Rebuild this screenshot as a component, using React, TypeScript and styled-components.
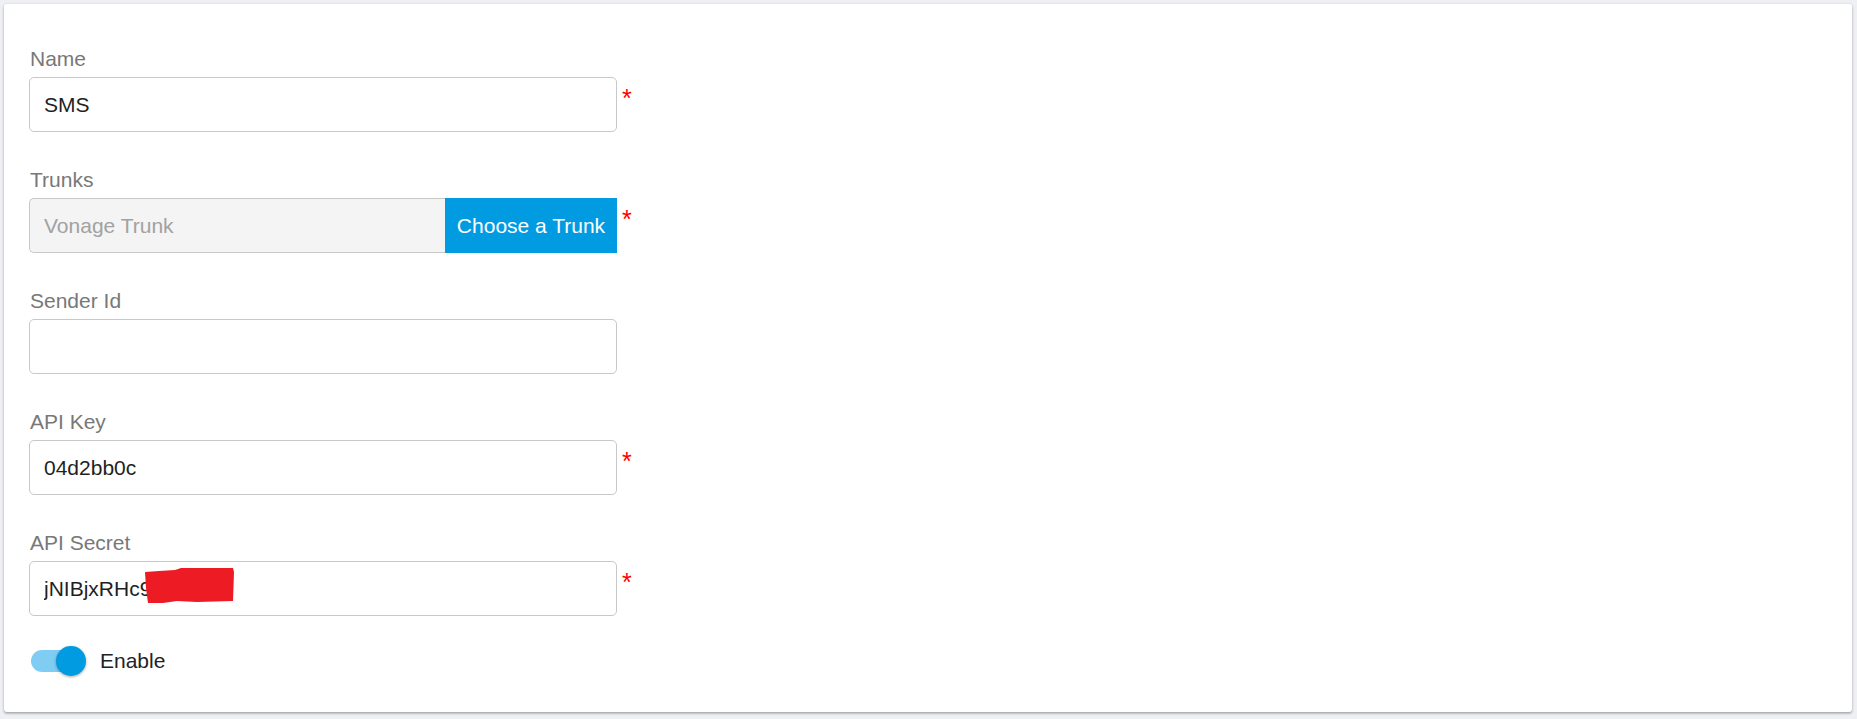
import React from 'react';
import styled, { createGlobalStyle } from 'styled-components';

const GlobalStyle = createGlobalStyle`
  html, body {
    margin: 0;
    padding: 0;
    background: #eef0f3;
  }
  body {
    font-family: "Liberation Sans", Arial, sans-serif;
  }
`;

const Page = styled.div`
  padding: 4px 5px 8px 4px;
`;

const Card = styled.div`
  background: #ffffff;
  border-radius: 3px;
  box-shadow: 0 1px 3px rgba(0, 0, 0, 0.28), 0 2px 2px rgba(0, 0, 0, 0.1);
  padding: 43px 25px 36px;
`;

const Form = styled.form`
  display: flex;
  flex-direction: column;
  gap: 36px;
  margin: 0;
`;

const Field = styled.div`
  display: flex;
  flex-direction: column;
`;

const Label = styled.label`
  font-size: 21px;
  line-height: 24px;
  color: #787878;
  margin-bottom: 6px;
  padding-left: 1px;
`;

const Row = styled.div`
  display: flex;
  align-items: flex-start;
`;

const InputWrap = styled.div`
  position: relative;
  width: 588px;
  height: 55px;
`;

const TextInput = styled.input`
  box-sizing: border-box;
  width: 100%;
  height: 100%;
  border: 1px solid #c8c8c8;
  border-radius: 5px;
  padding: 0 14px;
  font-family: inherit;
  font-size: 21px;
  color: #1f1f24;
  background: #ffffff;
  outline: none;
`;

const InputGroup = styled.div`
  display: flex;
  width: 588px;
  height: 55px;
`;

const GroupInput = styled.input`
  box-sizing: border-box;
  flex: 1;
  min-width: 0;
  height: 100%;
  border: 1px solid #c8c8c8;
  border-right: none;
  border-radius: 5px 0 0 5px;
  padding: 0 14px;
  font-family: inherit;
  font-size: 21px;
  background: #f4f4f4;
  outline: none;

  &::placeholder {
    color: #a2a2a2;
  }
`;

const GroupButton = styled.button`
  width: 172px;
  height: 100%;
  border: none;
  padding: 0 10px;
  background: #009be1;
  color: #ffffff;
  font-family: inherit;
  font-size: 21px;
  white-space: nowrap;
  cursor: pointer;
`;

const Required = styled.span`
  color: #ff0000;
  font-size: 25px;
  line-height: 25px;
  margin-left: 5px;
  margin-top: 9px;
`;

const Redaction = styled.svg`
  position: absolute;
  left: 116px;
  top: 7px;
`;

const ToggleRow = styled.div`
  display: flex;
  align-items: center;
  gap: 14px;
  margin-top: 30px;
  padding-left: 2px;
`;

const Switch = styled.div`
  position: relative;
  width: 55px;
  height: 30px;
  flex-shrink: 0;
`;

const Track = styled.div`
  position: absolute;
  left: 0;
  top: 4px;
  width: 50px;
  height: 22px;
  border-radius: 11px;
  background: #80cdf4;
`;

const Thumb = styled.div`
  position: absolute;
  right: 0;
  top: 0;
  width: 30px;
  height: 30px;
  border-radius: 50%;
  background: #009be1;
  box-shadow: 0 1px 3px rgba(0, 0, 0, 0.35);
`;

const ToggleLabel = styled.span`
  font-size: 21px;
  color: #222226;
`;

export default function App() {
  return (
    <>
      <GlobalStyle />
      <Page>
        <Card>
          <Form>
            <Field>
              <Label>Name</Label>
              <Row>
                <InputWrap>
                  <TextInput defaultValue="SMS" />
                </InputWrap>
                <Required>*</Required>
              </Row>
            </Field>
            <Field>
              <Label>Trunks</Label>
              <Row>
                <InputGroup>
                  <GroupInput placeholder="Vonage Trunk" disabled />
                  <GroupButton type="button">Choose a Trunk</GroupButton>
                </InputGroup>
                <Required>*</Required>
              </Row>
            </Field>
            <Field>
              <Label>Sender Id</Label>
              <Row>
                <InputWrap>
                  <TextInput />
                </InputWrap>
              </Row>
            </Field>
            <Field>
              <Label>API Key</Label>
              <Row>
                <InputWrap>
                  <TextInput defaultValue="04d2bb0c" />
                </InputWrap>
                <Required>*</Required>
              </Row>
            </Field>
            <Field>
              <Label>API Secret</Label>
              <Row>
                <InputWrap>
                  <TextInput defaultValue="jNIBjxRHc9" />
                  <Redaction width="90" height="36" viewBox="0 0 90 36">
                    <path
                      d="M0 4 L14 3 L30 2 L36 0 L88 0 L89 4 L88 33 L52 34 L32 33 L18 35 L3 35 L1 20 Z"
                      fill="#ed1c24"
                    />
                  </Redaction>
                </InputWrap>
                <Required>*</Required>
              </Row>
            </Field>
          </Form>
          <ToggleRow>
            <Switch>
              <Track />
              <Thumb />
            </Switch>
            <ToggleLabel>Enable</ToggleLabel>
          </ToggleRow>
        </Card>
      </Page>
    </>
  );
}
